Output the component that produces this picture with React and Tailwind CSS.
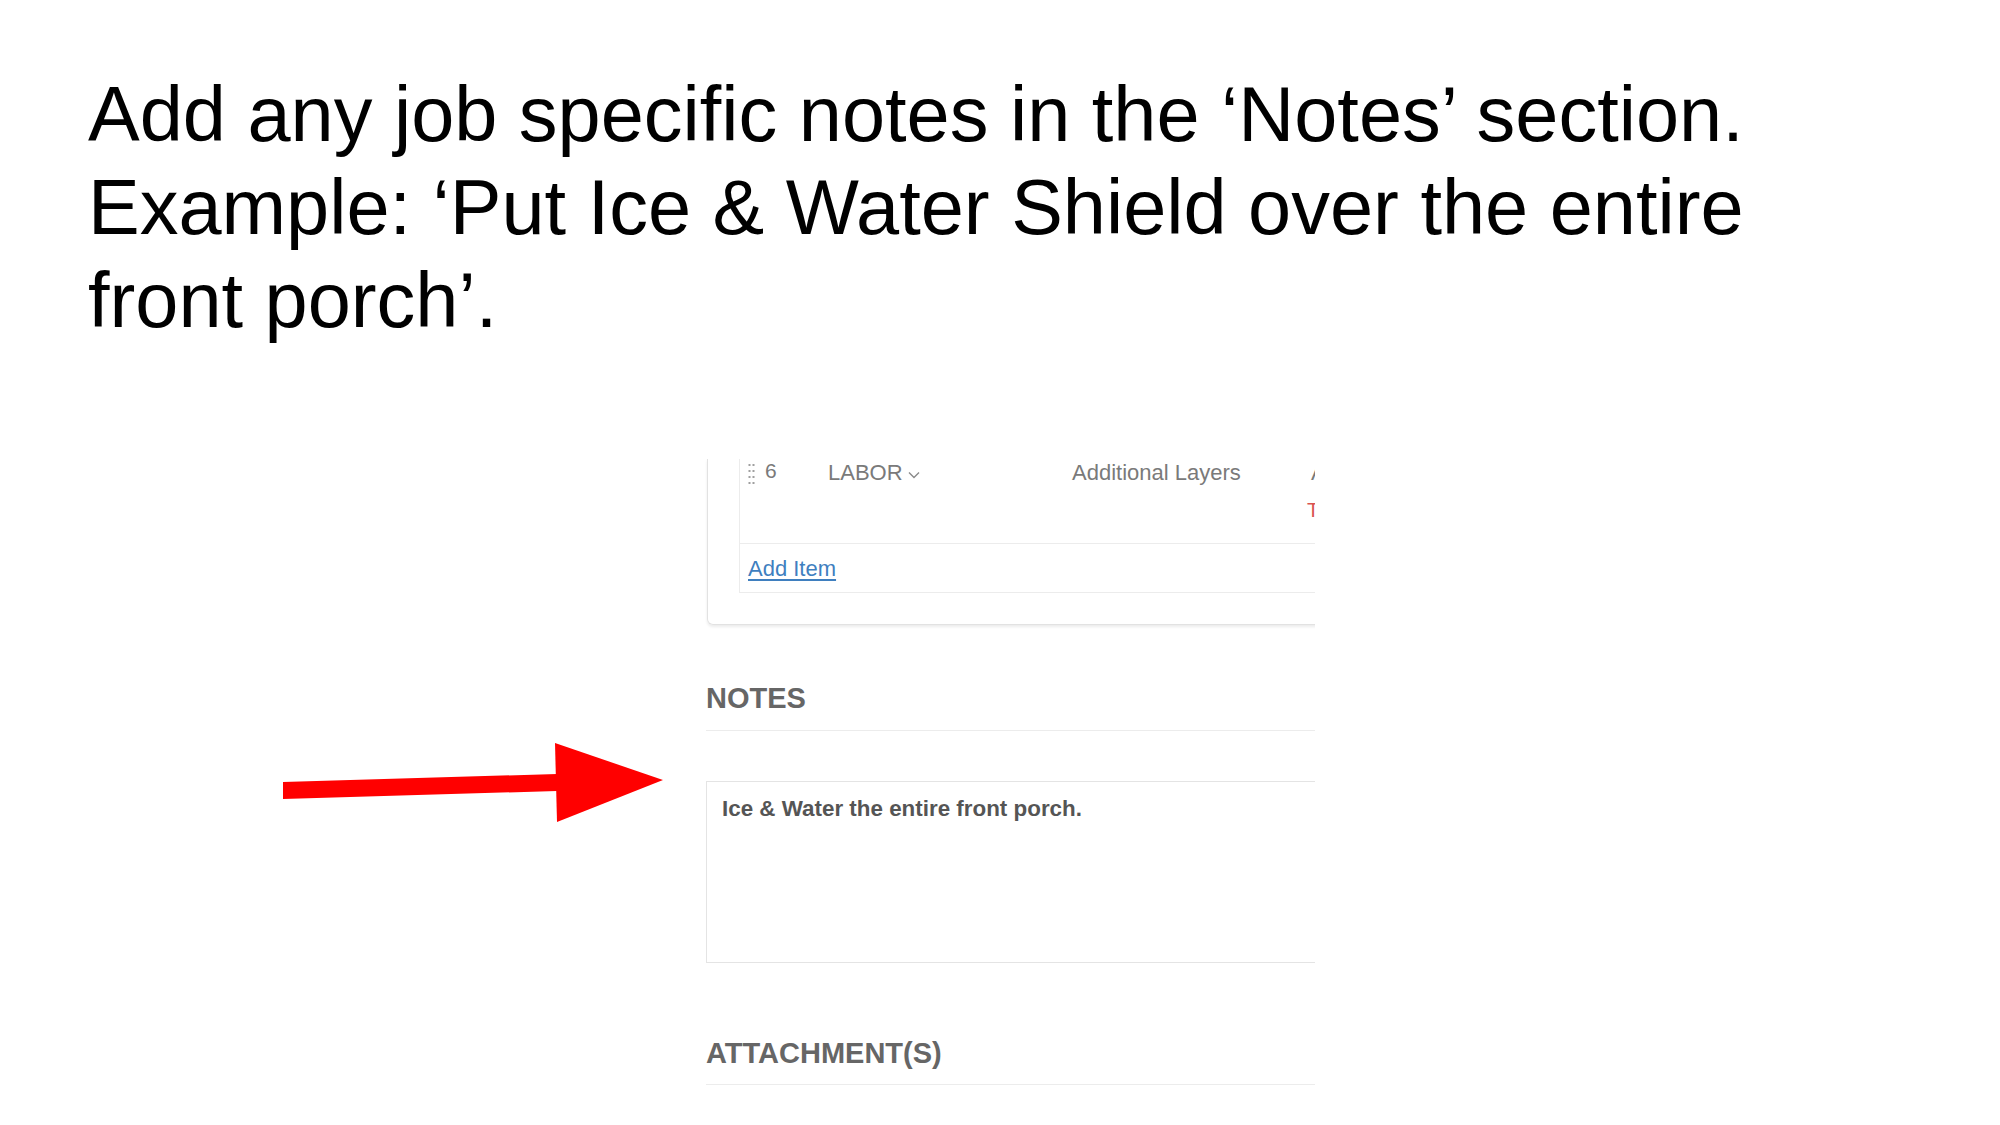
export default function App() {
  const f = "font-['Liberation_Sans',Arial,Helvetica,sans-serif]";
  return (
    <div className={`relative w-[2000px] h-[1125px] bg-white overflow-hidden ${f}`}>
      <h1 className="pl-[88px] pt-[68px] text-[77.5px] leading-[93px] text-black font-normal">
        Add any job specific notes in the ‘Notes’ section.
        <br />
        Example: ‘Put Ice &amp; Water Shield over the entire
        <br />
        front porch’.
      </h1>

      <div className="ml-[705px] mt-[112px] w-[610px] h-[640px] overflow-hidden">
        {/* Card with line items */}
        <div className="ml-[2px] w-[900px] border-x border-b border-[#e2e2e2] rounded-b-[6px] shadow-[0_2px_3px_rgba(0,0,0,0.08)] pl-[31px] pb-[31px]">
          <div className="border-l border-b border-[#ececec]">
            <div className="h-[85px] border-b border-[#ececec] pt-[1px] flex items-start text-[22px] leading-[26px] text-[#7a7a7a]">
              <div className="w-[88px] flex items-start pl-[8px]">
                <svg width="8" height="23" viewBox="0 0 8 23" className="mt-[3px]">
                  {[2, 8, 14, 20].map((y) => (
                    <g key={y} fill="#a0a0a0">
                      <rect x="0.5" y={y - 1} width="2" height="2" />
                      <rect x="4.5" y={y - 1} width="2" height="2" />
                    </g>
                  ))}
                </svg>
                <span className="ml-[9px] -mt-[2px] text-[21px]">6</span>
              </div>
              <div className="w-[244px] flex items-center">
                <span>LABOR</span>
                <svg width="12" height="8" viewBox="0 0 12 8" className="ml-[5px] mt-[4px]">
                  <path d="M1 1.5 L6 6.5 L11 1.5" fill="none" stroke="#8a8a8a" strokeWidth="1.4" />
                </svg>
              </div>
              <div className="w-[239px]">Additional Layers</div>
              <div className="flex flex-col">
                <span>Additional</span>
                <span className="mt-[12px] -ml-[4px] text-[20px] leading-[24px] text-[#d9534f]">Tear Off</span>
              </div>
            </div>
            <div className="h-[48px] pt-[12px] pl-[8px] text-[22px] leading-[26px]">
              <span className="text-[#3f7fbf] underline underline-offset-[3px]">Add Item</span>
            </div>
          </div>
        </div>

        {/* Notes */}
        <div className="ml-[1px] w-[800px] mt-[56px] pb-[15px] border-b border-[#ececec] text-[29px] leading-[34px] font-bold text-[#666666]">
          NOTES
        </div>
        <div className="ml-[1px] w-[800px] mt-[50px] h-[182px] border border-[#e4e4e4] pt-[14px] pl-[15px] text-[22.4px] leading-[26px] font-bold text-[#555555]">
          Ice &amp; Water the entire front porch.
        </div>

        {/* Attachments */}
        <div className="ml-[1px] w-[800px] mt-[73px] pb-[14px] border-b border-[#ececec] text-[29px] leading-[34px] font-bold text-[#666666]">
          ATTACHMENT(S)
        </div>
      </div>

      {/* Red annotation arrow */}
      <svg
        className="absolute left-[280px] top-[740px]"
        width="390"
        height="86"
        viewBox="0 0 390 86"
      >
        <polygon points="3,42 277,34 277,51 3,59" fill="#ff0000" />
        <polygon points="275,3 383,40 277,82" fill="#ff0000" />
      </svg>
    </div>
  );
}
